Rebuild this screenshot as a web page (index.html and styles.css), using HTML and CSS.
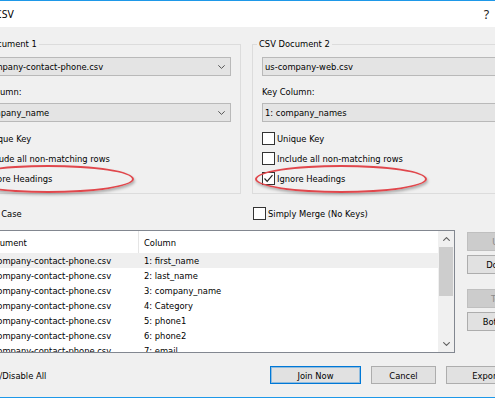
FILE: index.html
```html
<!DOCTYPE html>
<html>
<head>
<meta charset="utf-8">
<title>Join CSV</title>
<link rel="stylesheet" href="styles.css">
</head>
<body>
<div class="window">
  <div class="titlebar">
    <span class="title">CSV</span>
    <span class="tb-btn help">?</span>
    <span class="tb-btn close"><svg width="10" height="10" viewBox="0 0 10 10"><path d="M0.5 0.5L9.5 9.5M9.5 0.5L0.5 9.5" stroke="#000" stroke-width="1"/></svg></span>
  </div>
  <div class="content">
    <div class="groups">
      <fieldset class="group">
        <legend>CSV Document 1</legend>
        <div class="combo"><span>us-company-contact-phone.csv</span><svg class="chev" width="7" height="4" viewBox="0 0 7 4"><path d="M0.3 0.3L3.5 3.4L6.7 0.3" fill="none" stroke="#555" stroke-width="1"/></svg></div>
        <div class="label">Key Column:</div>
        <div class="combo"><span>1: company_name</span><svg class="chev" width="7" height="4" viewBox="0 0 7 4"><path d="M0.3 0.3L3.5 3.4L6.7 0.3" fill="none" stroke="#555" stroke-width="1"/></svg></div>
        <div class="checks">
          <label class="check"><span class="box"></span>Unique Key</label>
          <label class="check"><span class="box"></span>Include all non-matching rows</label>
          <label class="check"><span class="box"><svg width="11" height="11" viewBox="0 0 11 11"><path d="M1.5 5.5L4.2 8.3L9.5 2.2" fill="none" stroke="#222" stroke-width="1.2"/></svg></span>Ignore Headings</label>
        </div>
      </fieldset>
      <fieldset class="group">
        <legend>CSV Document 2</legend>
        <div class="combo"><span>us-company-web.csv</span><svg class="chev" width="7" height="4" viewBox="0 0 7 4"><path d="M0.3 0.3L3.5 3.4L6.7 0.3" fill="none" stroke="#555" stroke-width="1"/></svg></div>
        <div class="label">Key Column:</div>
        <div class="combo"><span>1: company_names</span><svg class="chev" width="7" height="4" viewBox="0 0 7 4"><path d="M0.3 0.3L3.5 3.4L6.7 0.3" fill="none" stroke="#555" stroke-width="1"/></svg></div>
        <div class="checks">
          <label class="check"><span class="box"></span>Unique Key</label>
          <label class="check"><span class="box"></span>Include all non-matching rows</label>
          <label class="check"><span class="box"><svg width="11" height="11" viewBox="0 0 11 11"><path d="M1.5 5.5L4.2 8.3L9.5 2.2" fill="none" stroke="#222" stroke-width="1.2"/></svg></span>Ignore Headings</label>
        </div>
      </fieldset>
      <div class="ring ring1"></div>
      <div class="ring ring2"></div>
    </div>

    <div class="options">
      <label class="check shift-case"><span class="box"></span>Match Case</label>
      <label class="check"><span class="box"></span>Simply Merge (No Keys)</label>
    </div>

    <div class="listarea">
      <div class="list">
        <div class="lv">
          <div class="lv-head"><div class="c1">CSV Document</div><div class="c2">Column</div></div>
          <div class="lv-row sel"><div class="c1">us-company-contact-phone.csv</div><div class="c2">1: first_name</div></div>
          <div class="lv-row"><div class="c1">us-company-contact-phone.csv</div><div class="c2">2: last_name</div></div>
          <div class="lv-row"><div class="c1">us-company-contact-phone.csv</div><div class="c2">3: company_name</div></div>
          <div class="lv-row"><div class="c1">us-company-contact-phone.csv</div><div class="c2">4: Category</div></div>
          <div class="lv-row"><div class="c1">us-company-contact-phone.csv</div><div class="c2">5: phone1</div></div>
          <div class="lv-row"><div class="c1">us-company-contact-phone.csv</div><div class="c2">6: phone2</div></div>
          <div class="lv-row"><div class="c1">us-company-contact-phone.csv</div><div class="c2">7: email</div></div>
        </div>
        <div class="vscroll">
          <div class="arrow"><svg width="7" height="4" viewBox="0 0 7 4"><path d="M0.3 3.7L3.5 0.6L6.7 3.7" fill="none" stroke="#606060" stroke-width="1.1"/></svg></div>
          <div class="track"><div class="thumb"></div></div>
          <div class="arrow"><svg width="7" height="4" viewBox="0 0 7 4"><path d="M0.3 0.3L3.5 3.4L6.7 0.3" fill="none" stroke="#606060" stroke-width="1.1"/></svg></div>
        </div>
      </div>
      <div class="side">
        <button class="btn" disabled>Up</button>
        <button class="btn">Down</button>
        <button class="btn sep" disabled>Top</button>
        <button class="btn">Bottom</button>
      </div>
    </div>

    <div class="footer">
      <label class="check shift-all"><span class="box"></span>Enable/Disable All</label>
      <div class="actions">
        <button class="btn default w-join">Join Now</button>
        <button class="btn w-cancel">Cancel</button>
        <button class="btn w-export">Export...</button>
      </div>
    </div>
  </div>
</div>
</body>
</html>
```

FILE: styles.css
```css
* { box-sizing: border-box; }
html, body {
  margin: 0;
  padding: 0;
  background: #ffffff;
  overflow: hidden;
}
body { width: 495px; height: 400px; }

.window {
  margin-left: -52px;
  width: 598px;
  border: 1px solid #1e98e8;
  background: #f0f0f0;
  font-family: "DejaVu Sans Condensed", "DejaVu Sans", sans-serif;
  font-stretch: condensed;
  font-size: 9.3px;
  color: #000;
}

.titlebar {
  height: 26px;
  background: #ffffff;
  display: flex;
  align-items: center;
}
.title {
  flex: 1;
  padding-left: 46px;
  font-family: "Noto Sans", sans-serif;
  font-stretch: normal;
  font-size: 10.5px;
  color: #000;
}
.tb-btn {
  width: 39px;
  height: 26px;
  display: flex;
  align-items: center;
  justify-content: center;
}
.help {
  font-family: "Noto Sans", sans-serif;
  font-stretch: normal;
  font-size: 12.5px;
  color: #222;
}

.content { padding: 11px 11px 13px 10px; }

.groups {
  position: relative;
  display: grid;
  grid-template-columns: 282px 282px;
  column-gap: 11px;
}
.group {
  margin: 0;
  min-width: 0;
  border: 1px solid #dcdcdc;
  padding: 7px 9px 5px 9px;
}
.group legend {
  padding: 0 2px;
  margin-left: -5px;
  line-height: 12px;
}

.combo {
  height: 19px;
  border: 1px solid #b9b9b9;
  background: #e4e4e4;
  display: flex;
  align-items: center;
  justify-content: space-between;
  padding: 0 5px 0 2px;
  white-space: nowrap;
}
.chev { flex: none; }
.label {
  margin-top: 10px;
  margin-bottom: 5px;
  line-height: 12px;
}
.checks { margin-top: 6px; }
.check {
  display: flex;
  align-items: center;
  height: 20px;
  white-space: nowrap;
}
.box {
  flex: none;
  width: 13px;
  height: 13px;
  border: 1px solid #333333;
  background: #ffffff;
  margin-right: 2px;
  display: flex;
  align-items: center;
  justify-content: center;
}
.shift-case { margin-left: -2px; }
.shift-all { margin-left: -3px; }

.ring {
  position: absolute;
  top: 127px;
  width: 172px;
  height: 28px;
  border: 2px solid #e0474c;
  border-radius: 50%;
  box-shadow: 1px 2px 3px rgba(0, 0, 0, 0.28);
}
.ring1 { left: 3px; }
.ring2 { left: 296px; }

.options {
  display: grid;
  grid-template-columns: 282px 282px;
  column-gap: 11px;
  margin-top: 9px;
  padding-left: 1px;
}

.listarea {
  display: flex;
  margin-top: 7px;
}
.list {
  flex: none;
  width: 496px;
  height: 123px;
  border: 1px solid #828790;
  background: #ffffff;
  display: flex;
  overflow: hidden;
}
.lv {
  flex: 1;
  overflow: hidden;
}
.lv-head {
  display: flex;
  height: 22px;
  align-items: stretch;
}
.lv-head .c1 {
  width: 179px;
  border-right: 1px solid #e5e5e5;
  padding-left: 4px;
  display: flex;
  align-items: center;
}
.lv-head .c2 {
  padding-left: 5px;
  display: flex;
  align-items: center;
}
.lv-row {
  display: flex;
  height: 15px;
  align-items: center;
  white-space: nowrap;
}
.lv-row.sel { background: #efefef; }
.lv-row .c1 {
  width: 179px;
  padding-left: 20px;
  overflow: hidden;
}
.lv-row .c2 { padding-left: 5px; }

.vscroll {
  flex: none;
  width: 16px;
  background: #f0f0f0;
  display: flex;
  flex-direction: column;
}
.arrow {
  height: 16px;
  display: flex;
  align-items: center;
  justify-content: center;
  flex: none;
}
.track {
  flex: 1;
  padding: 0 1px;
}
.thumb {
  height: 49px;
  background: #cdcdcd;
}

.side {
  margin-left: 12px;
  width: 62px;
  padding-top: 2px;
  display: flex;
  flex-direction: column;
  gap: 4px;
}
.btn {
  font: inherit;
  font-stretch: condensed;
  color: #000;
  height: 19px;
  padding: 0;
  border: 1px solid #adadad;
  background: #e1e1e1;
  white-space: nowrap;
}
.btn:disabled {
  background: #cccccc;
  border-color: #bfbfbf;
  color: #8a8a8a;
}
.side .sep { margin-top: 11px; }

.footer {
  display: flex;
  align-items: center;
  justify-content: space-between;
  margin-top: 13px;
  height: 18px;
}
.actions {
  display: flex;
  gap: 10px;
}
.actions .btn { height: 18px; }
.btn.default {
  border-color: #0078d7;
  box-shadow: inset 0 0 0 1px rgba(0, 120, 215, 0.35);
}
.w-join { width: 91px; }
.w-cancel { width: 65px; }
.w-export { width: 88px; }
```
